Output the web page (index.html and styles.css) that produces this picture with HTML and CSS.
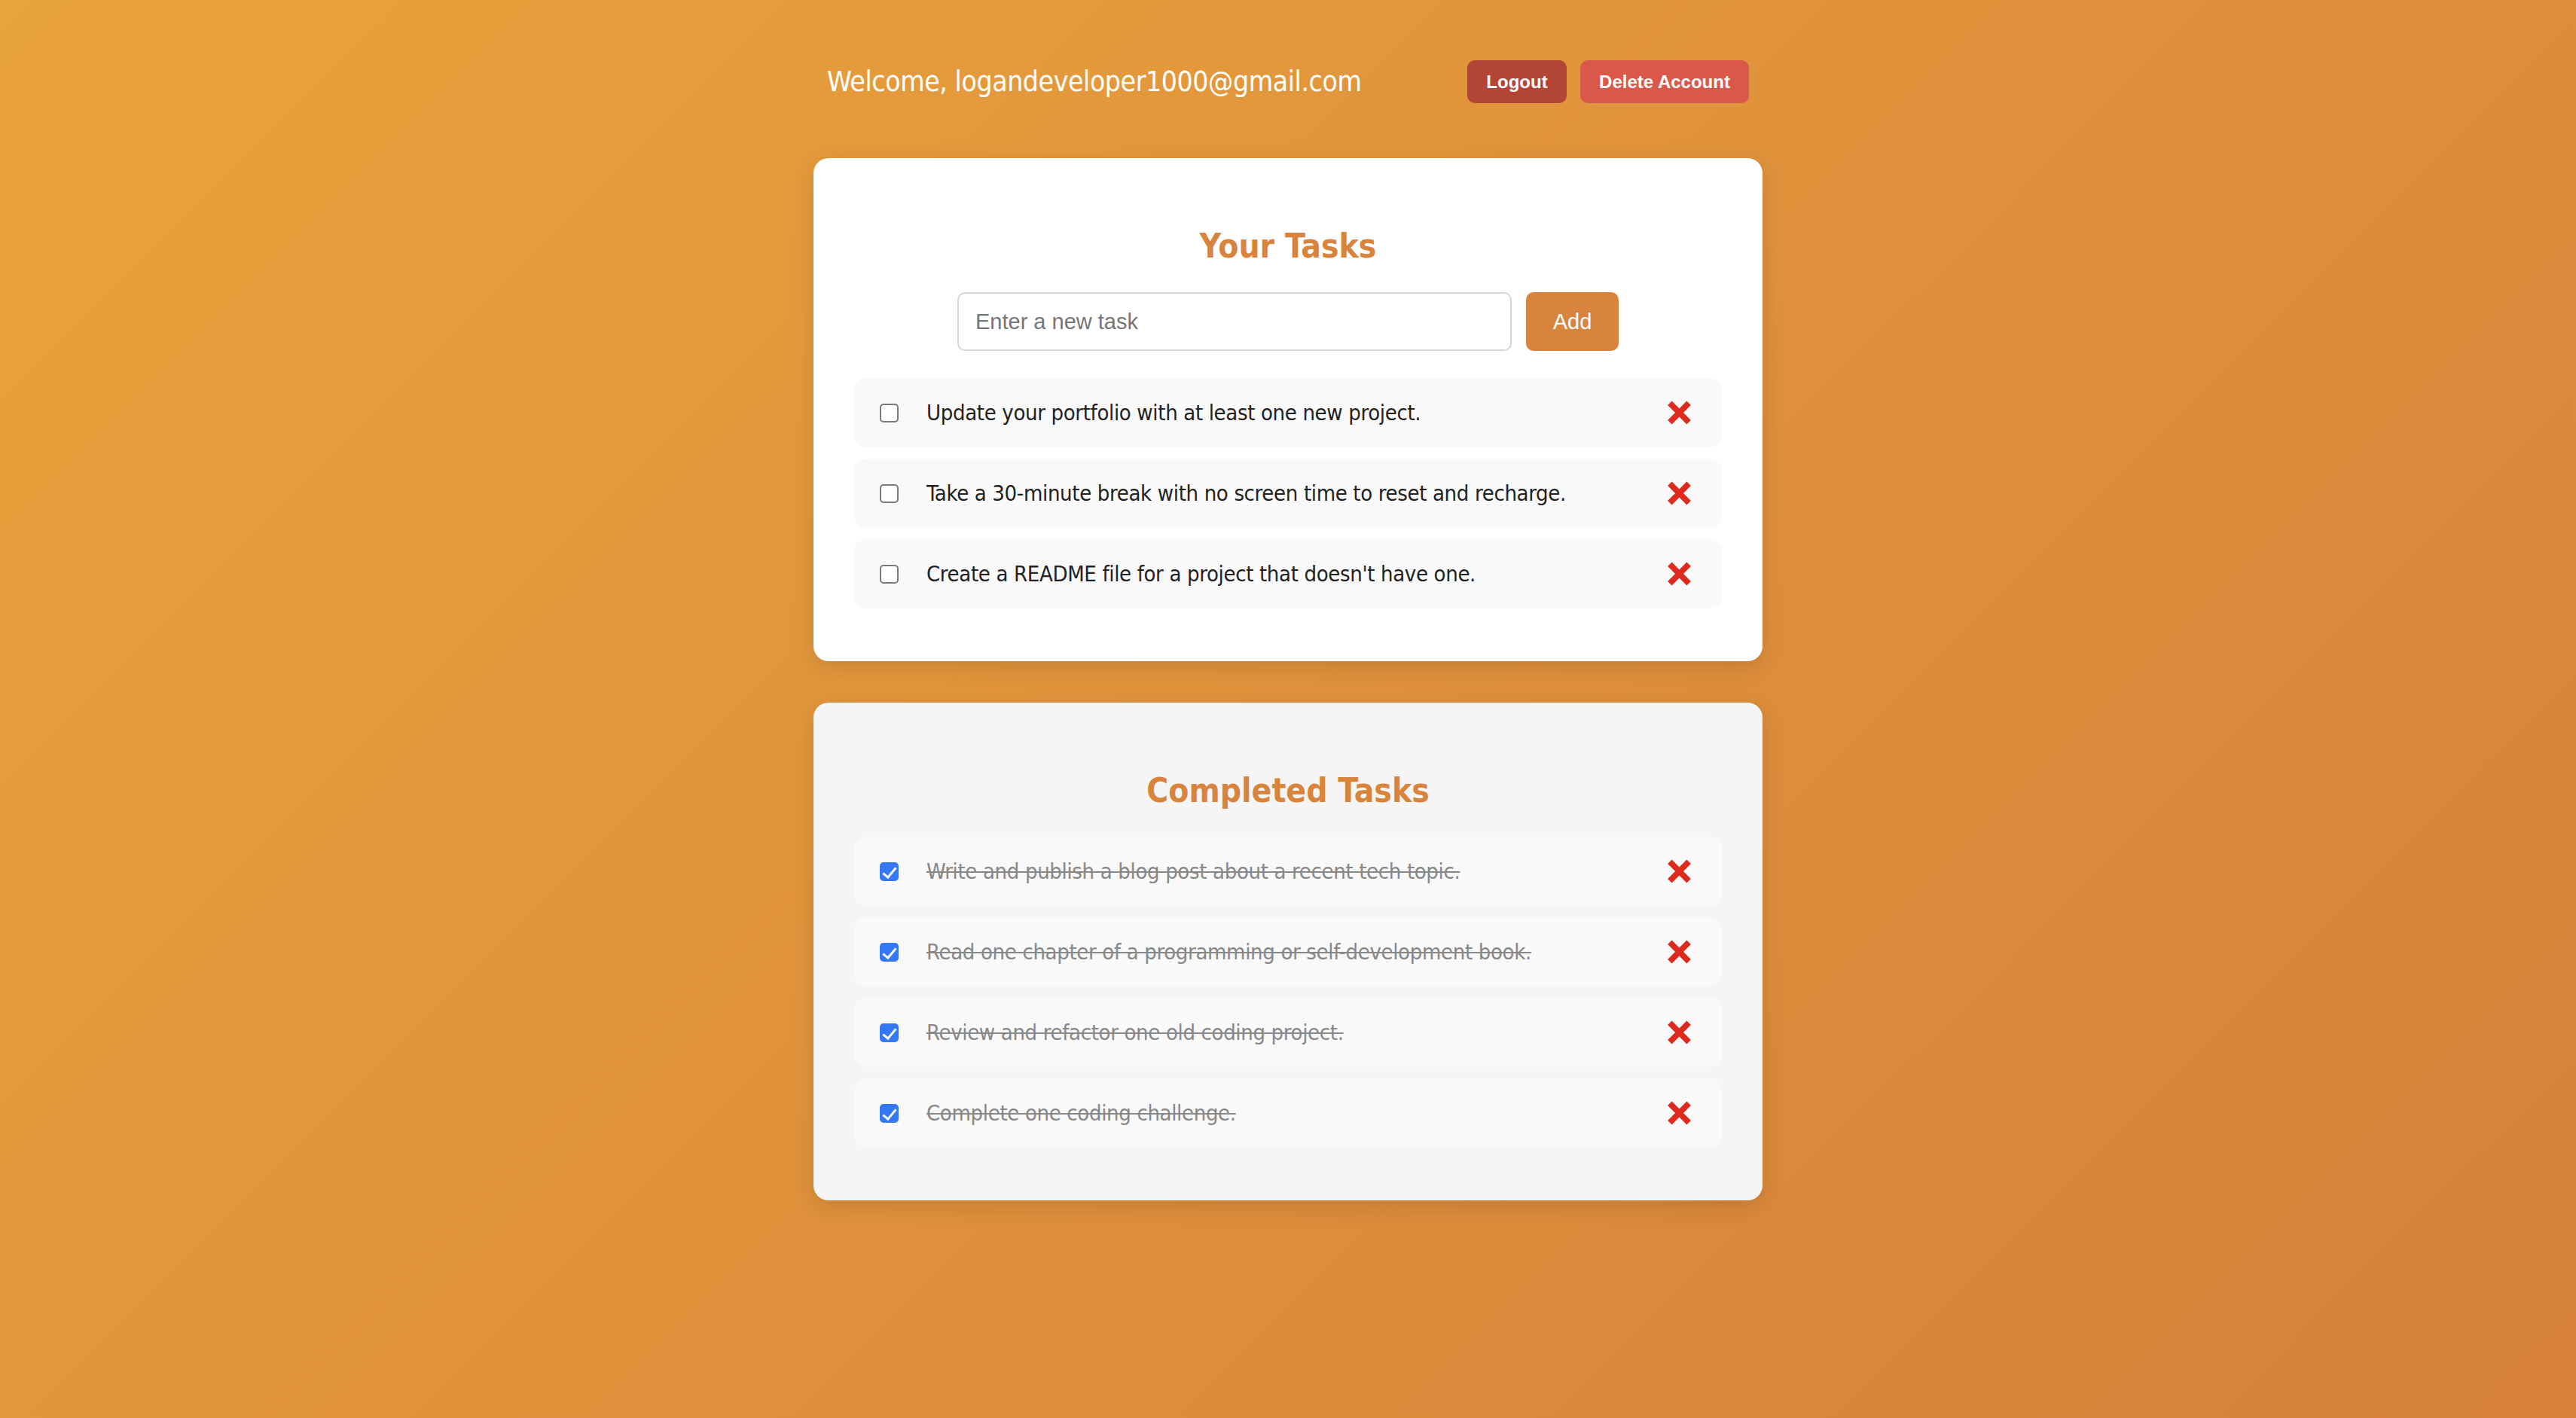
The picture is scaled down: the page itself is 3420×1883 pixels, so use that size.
FILE: index.html
```html
<!DOCTYPE html>
<html lang="en">
<head>
<meta charset="utf-8">
<title>Tasks</title>
<link rel="stylesheet" href="styles.css">
</head>
<body>
<div class="page">
  <header class="topbar">
    <span class="welcome">Welcome, logandeveloper1000@gmail.com</span>
    <div class="actions">
      <button class="btn btn-logout">Logout</button>
      <button class="btn btn-delete">Delete Account</button>
    </div>
  </header>

  <section class="card">
    <h2 class="card-title">Your Tasks</h2>
    <form class="add-form">
      <input class="task-input" type="text" placeholder="Enter a new task">
      <button class="add-btn" type="button">Add</button>
    </form>
    <ul class="task-list">
      <li class="task"><input class="check" type="checkbox"><span class="task-text">Update your portfolio with at least one new project.</span><button class="del" type="button" aria-label="Delete"><svg viewBox="0 0 36 34" class="x-icon"><path d="M5 4 L31 30 M31 4 L5 30"/></svg></button></li>
      <li class="task"><input class="check" type="checkbox"><span class="task-text">Take a 30-minute break with no screen time to reset and recharge.</span><button class="del" type="button" aria-label="Delete"><svg viewBox="0 0 36 34" class="x-icon"><path d="M5 4 L31 30 M31 4 L5 30"/></svg></button></li>
      <li class="task"><input class="check" type="checkbox"><span class="task-text">Create a README file for a project that doesn't have one.</span><button class="del" type="button" aria-label="Delete"><svg viewBox="0 0 36 34" class="x-icon"><path d="M5 4 L31 30 M31 4 L5 30"/></svg></button></li>
    </ul>
  </section>

  <section class="card card-done">
    <h2 class="card-title">Completed Tasks</h2>
    <ul class="task-list">
      <li class="task done"><input class="check" type="checkbox" checked><span class="task-text">Write and publish a blog post about a recent tech topic.</span><button class="del" type="button" aria-label="Delete"><svg viewBox="0 0 36 34" class="x-icon"><path d="M5 4 L31 30 M31 4 L5 30"/></svg></button></li>
      <li class="task done"><input class="check" type="checkbox" checked><span class="task-text">Read one chapter of a programming or self-development book.</span><button class="del" type="button" aria-label="Delete"><svg viewBox="0 0 36 34" class="x-icon"><path d="M5 4 L31 30 M31 4 L5 30"/></svg></button></li>
      <li class="task done"><input class="check" type="checkbox" checked><span class="task-text">Review and refactor one old coding project.</span><button class="del" type="button" aria-label="Delete"><svg viewBox="0 0 36 34" class="x-icon"><path d="M5 4 L31 30 M31 4 L5 30"/></svg></button></li>
      <li class="task done"><input class="check" type="checkbox" checked><span class="task-text">Complete one coding challenge.</span><button class="del" type="button" aria-label="Delete"><svg viewBox="0 0 36 34" class="x-icon"><path d="M5 4 L31 30 M31 4 L5 30"/></svg></button></li>
    </ul>
  </section>
</div>
</body>
</html>
```

FILE: styles.css
```css
* { box-sizing: border-box; }

html, body {
  margin: 0;
  padding: 0;
}

body {
  min-height: 100vh;
  background: linear-gradient(135deg, #e9a33c 0%, #d6803a 100%);
  font-family: "DejaVu Sans Condensed", "DejaVu Sans", sans-serif;
  color: #222;
}

.page {
  width: 1260px;
  margin: 0 auto;
  padding-top: 80px;
  padding-bottom: 80px;
}

.topbar {
  display: flex;
  align-items: center;
  justify-content: space-between;
  height: 57px;
  padding: 0 18px;
  margin-bottom: 73px;
}

.welcome {
  color: #fff;
  font-size: 37px;
  letter-spacing: -0.4px;
}

.actions {
  display: flex;
  gap: 18px;
}

.btn {
  height: 57px;
  border: none;
  border-radius: 10px;
  color: #fff;
  font-family: "Liberation Sans", Arial, sans-serif;
  font-weight: bold;
  font-size: 24px;
  padding: 0;
  cursor: pointer;
}

.btn-logout {
  width: 132px;
  background: #b34536;
}

.btn-delete {
  width: 224px;
  background: #d9584a;
}

.card {
  background: #fff;
  border-radius: 20px;
  padding: 90px 54px 70px;
  box-shadow: 0 8px 30px rgba(0, 0, 0, 0.12);
  margin-bottom: 55px;
}

.card-done {
  background: #f5f5f5;
}

.card-title {
  margin: 0 0 34px;
  text-align: center;
  color: #d9843c;
  font-size: 44px;
  line-height: 54px;
  font-weight: bold;
}

.add-form {
  display: flex;
  justify-content: center;
  gap: 19px;
  margin: 0 0 36px;
}

.task-input {
  width: 736px;
  height: 78px;
  border: 2px solid #d6d6d6;
  border-radius: 10px;
  padding: 0 22px;
  font-family: "Liberation Sans", Arial, sans-serif;
  font-size: 29px;
  color: #222;
  background: #fff;
  outline: none;
}

.task-input::placeholder {
  color: #757575;
}

.add-btn {
  width: 123px;
  height: 78px;
  border: none;
  border-radius: 10px;
  background: #d9843c;
  color: #fff;
  font-family: "Liberation Sans", Arial, sans-serif;
  font-size: 29px;
  padding: 0;
}

.task-list {
  list-style: none;
  margin: 0;
  padding: 0;
  display: flex;
  flex-direction: column;
  gap: 15px;
}

.task {
  display: flex;
  align-items: center;
  height: 92px;
  padding: 0 39px 0 34px;
  background: #f9f9f9;
  border-radius: 16px;
}

.check {
  appearance: none;
  -webkit-appearance: none;
  width: 25px;
  height: 25px;
  margin: 0 37px 0 0;
  border: 2px solid #7a7a7a;
  border-radius: 5px;
  background: #fff;
  flex: none;
  position: relative;
}

.check:checked {
  background: #3478f6;
  border-color: #3478f6;
}

.check:checked::after {
  content: "";
  position: absolute;
  left: 6px;
  top: 1px;
  width: 7px;
  height: 15px;
  border: solid #fff;
  border-width: 0 3px 3px 0;
  transform: rotate(40deg);
}

.task-text {
  flex: 1;
  font-size: 29px;
  letter-spacing: -0.35px;
  color: #222;
}

.done .task-text {
  color: #888;
  text-decoration: line-through;
}

.del {
  border: none;
  background: none;
  padding: 0;
  width: 35px;
  height: 34px;
  display: flex;
  cursor: pointer;
}

.x-icon {
  width: 35px;
  height: 34px;
  fill: none;
  stroke: #dc2b1e;
  stroke-width: 8;
  stroke-linecap: butt;
}
```
